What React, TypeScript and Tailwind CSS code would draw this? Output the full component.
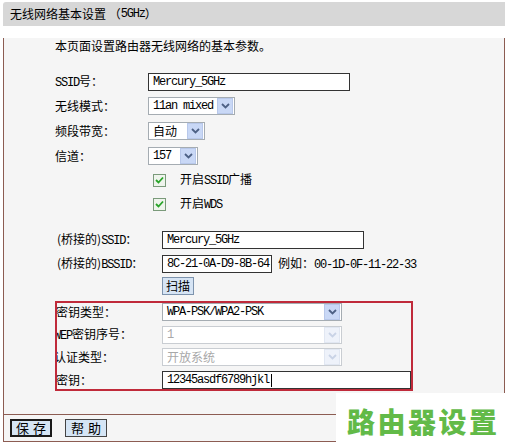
import React from "react";

const CJK = { fontFamily: '"Noto Sans CJK SC", "Noto Sans", sans-serif' };
const MONO = {
  fontFamily: '"Liberation Mono", "Noto Sans CJK SC", monospace',
  fontSize: "12px",
  letterSpacing: "-1.2px",
};

function Chevron({ disabled }: { disabled?: boolean }) {
  return (
    <svg width="9" height="6" viewBox="0 0 9 6">
      <path
        d="M1 1 L4.5 4.5 L8 1"
        fill="none"
        stroke={disabled ? "#c9d3e6" : "#4d6185"}
        strokeWidth="1.8"
      />
    </svg>
  );
}

function Select({
  width,
  value,
  disabled,
  mono,
}: {
  width: string;
  value: string;
  disabled?: boolean;
  mono?: boolean;
}) {
  return (
    <div
      className={`${width} flex h-[18px] items-center border ${
        disabled ? "border-[#c9cdd2]" : "border-[#a5acb2]"
      } bg-white`}
    >
      <span
        className={`flex-1 truncate pl-[4px] leading-[16px] ${
          disabled ? "text-[#a8a8a8]" : "text-black"
        } text-[12px]`}
        style={mono ? MONO : CJK}
      >
        {value}
      </span>
      <span
        className={`mr-[1px] flex h-[16px] w-[16px] items-center justify-center border ${
          disabled
            ? "border-[#e1e7f2] bg-[#eef2fa]"
            : "border-[#b8c8ea] bg-[#c9d8f6]"
        }`}
      >
        <Chevron disabled={disabled} />
      </span>
    </div>
  );
}

function TextInput({
  width,
  value,
  caret,
}: {
  width: string;
  value: string;
  caret?: boolean;
}) {
  return (
    <div
      className={`${width} flex h-[18px] items-center border border-[#333] bg-white pl-[4px]`}
    >
      <span className="leading-[16px] text-black" style={MONO}>
        {value}
      </span>
      {caret && <span className="ml-[2px] h-[13px] w-px bg-black" />}
    </div>
  );
}

function Check() {
  return (
    <span className="flex h-[13px] w-[13px] items-center justify-center border border-[#7a9a7a] bg-[#eef4ec]">
      <svg width="9" height="8" viewBox="0 0 9 8">
        <path
          d="M1 4 L3.5 6.5 L8 1.5"
          fill="none"
          stroke="#28a428"
          strokeWidth="1.8"
        />
      </svg>
    </span>
  );
}

export default function App() {
  return (
    <div className="relative h-[448px] w-[508px] overflow-hidden bg-white text-[12px] text-black" style={CJK}>
      <div className="ml-[3px] mt-[2px] w-[502px]">
        {/* header */}
        <div className="flex h-[24px] items-center rounded-tl-[3px] bg-[#d7d7d7] pl-[7px] text-[12px]">
          无线网络基本设置 （<span style={MONO}>5GHz</span>）
        </div>
        {/* panel */}
        <div className="border-x border-b border-[#8c5c52] bg-[#f5f5f5] pb-[23px] pl-[51px]">
          <div className="mt-[12px] flex h-[16px] items-center">
            本页面设置路由器无线网络的基本参数。
          </div>
          <div className="mt-[16px] flex h-[23px] items-center">
            <span className="w-[93px]">
              <span style={MONO}>SSID</span>号：
            </span>
            <TextInput width="w-[202px]" value="Mercury_5GHz" />
          </div>
          <div className="flex h-[25px] items-center">
            <span className="w-[93px]">无线模式：</span>
            <Select width="w-[87px]" value="11an mixed" mono />
          </div>
          <div className="flex h-[25px] items-center">
            <span className="w-[93px]">频段带宽：</span>
            <Select width="w-[57px]" value="自动" />
          </div>
          <div className="flex h-[25px] items-center">
            <span className="w-[93px]">信道：</span>
            <Select width="w-[50px]" value="157" mono />
          </div>
          <div className="flex h-[24px] items-center">
            <span className="w-[98px]" />
            <Check />
            <span className="ml-[14px]">
              开启<span style={MONO}>SSID</span>广播
            </span>
          </div>
          <div className="flex h-[24px] items-center">
            <span className="w-[98px]" />
            <Check />
            <span className="ml-[14px]">
              开启<span style={MONO}>WDS</span>
            </span>
          </div>

          <div className="mt-[12px] flex h-[24px] items-center">
            <span className="w-[107px] pl-[2px]">
              (桥接的)<span style={MONO}>SSID</span>：
            </span>
            <TextInput width="w-[202px]" value="Mercury_5GHz" />
          </div>
          <div className="flex h-[24px] items-center">
            <span className="w-[107px] pl-[2px]">
              (桥接的)<span style={MONO}>BSSID</span>：
            </span>
            <TextInput width="w-[110px]" value="8C-21-0A-D9-8B-64" />
            <span className="ml-[6px]">
              例如：<span style={MONO}>00-1D-0F-11-22-33</span>
            </span>
          </div>
          <div className="flex h-[20px] items-center">
            <span className="w-[107px]" />
            <span className="flex h-[18px] w-[32px] items-center justify-center border border-[#7d93ad] bg-[#d6e4f4] text-[12px]">
              扫描
            </span>
          </div>

          {/* red box */}
          <div className="mt-[5px] w-[358px] overflow-hidden border-2 border-[#c02a3a]">
            <div className="flex h-[18px] items-center">
              <span className="-ml-[1px] w-[106px] whitespace-nowrap">密钥类型：</span>
              <Select width="w-[180px]" value="WPA-PSK/WPA2-PSK" mono />
            </div>
            <div className="mt-[5px] flex h-[18px] items-center">
              <span className="-ml-[3px] w-[108px] whitespace-nowrap">
                <span style={MONO}>WEP</span>密钥序号：
              </span>
              <Select width="w-[180px]" value="1" mono disabled />
            </div>
            <div className="mt-[4px] flex h-[18px] items-center">
              <span className="-ml-[3px] w-[108px] whitespace-nowrap">认证类型：</span>
              <Select width="w-[180px]" value="开放系统" disabled />
            </div>
            <div className="mt-[5px] flex h-[18px] items-center">
              <span className="-ml-[1px] w-[106px] whitespace-nowrap">密钥：</span>
              <TextInput width="flex-1" value="12345asdf6789hjkl" caret />
            </div>
          </div>
        </div>
        {/* buttons */}
        <div className="flex h-[27px] items-start gap-[13px] border-x border-b border-[#8c5c52] bg-[#f5f5f5] pl-[6px] pt-[4px]">
          <span className="flex h-[18px] w-[42px] items-center justify-center border-2 border-[#1a1a1a] bg-[#d5e5f5] pl-[4px] text-[13px] tracking-[4px]">
            保存
          </span>
          <span className="flex h-[18px] w-[42px] items-center justify-center border border-[#444] bg-[#d5e5f5] pl-[4px] text-[13px] tracking-[4px]">
            帮助
          </span>
        </div>
      </div>

      {/* watermark */}
      <div className="absolute left-[336px] top-[393px] flex h-[55px] w-[172px] items-center justify-start bg-white pl-[11px]">
        <span
          className="text-[28px] font-black leading-none tracking-[2.5px] text-[#62ba48]"
          style={CJK}
        >
          路由器设置
        </span>
      </div>
    </div>
  );
}
